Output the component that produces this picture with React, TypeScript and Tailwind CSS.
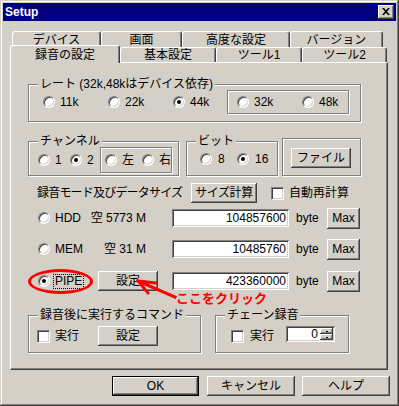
import React from 'react';

const raised =
  'bg-[#d4d0c8] shadow-[inset_-1px_-1px_0_#404040,inset_1px_1px_0_#ffffff,inset_-2px_-2px_0_#808080,inset_2px_2px_0_#d4d0c8]';
const sunken =
  'bg-white shadow-[inset_1px_1px_0_#808080,inset_-1px_-1px_0_#ffffff,inset_2px_2px_0_#404040,inset_-2px_-2px_0_#d4d0c8]';

type Props = { className?: string; children?: React.ReactNode };

function Btn({ className = '', children }: Props) {
  return <div className={`flex items-center justify-center shrink-0 ${raised} ${className}`}>{children}</div>;
}

function Field({ className = '', children }: Props) {
  return <div className={`flex items-center shrink-0 ${sunken} ${className}`}>{children}</div>;
}

function Radio({ checked = false }: { checked?: boolean }) {
  return (
    <span className="w-[12px] h-[12px] shrink-0 rounded-full bg-white border border-t-[#808080] border-l-[#808080] border-r-white border-b-white shadow-[inset_1px_1px_0_#404040,inset_-1px_-1px_0_#d4d0c8] flex items-center justify-center">
      {checked && <span className="w-[4px] h-[4px] rounded-full bg-black" />}
    </span>
  );
}

function Check({ className = '' }: { className?: string }) {
  return (
    <span
      className={`w-[13px] h-[13px] shrink-0 bg-white border border-t-[#808080] border-l-[#808080] border-r-white border-b-white shadow-[inset_1px_1px_0_#404040,inset_-1px_-1px_0_#d4d0c8] ${className}`}
    />
  );
}

function RadioItem({ label, checked, className = '' }: { label: string; checked?: boolean; className?: string }) {
  return (
    <div className={`flex items-center gap-[5px] shrink-0 ${className}`}>
      <Radio checked={checked} />
      <span>{label}</span>
    </div>
  );
}

function Group({ label, className = '', children }: Props & { label?: string }) {
  return (
    <div className={`relative shrink-0 border border-[#808080] shadow-[inset_1px_1px_0_#ffffff,1px_1px_0_#ffffff] ${className}`}>
      {label && (
        <span className="absolute -top-[8px] left-[9px] px-[2px] bg-[#d4d0c8] leading-[14px] whitespace-nowrap">{label}</span>
      )}
      {children}
    </div>
  );
}

function Tab({ label, selected, className = '' }: { label: string; selected?: boolean; className?: string }) {
  return (
    <div
      className={`flex items-center justify-center shrink-0 bg-[#d4d0c8] border-t border-l border-white border-r border-r-[#404040] shadow-[inset_-1px_0_0_#808080] rounded-tl-[3px] rounded-tr-[3px] ${
        selected ? 'relative z-10 -mb-[1px]' : ''
      } ${className}`}
    >
      {label}
    </div>
  );
}

function SizeRow({ mode, free, value, checked }: { mode: string; free: string; value: string; checked?: boolean }) {
  return (
    <div className="h-[22px] flex items-center pl-[10px]">
      <Radio checked={checked} />
      <span className="ml-[5px] w-[33px]">{mode}</span>
      <span className="w-[58px] text-right">{free}</span>
      <Field className="ml-[26px] w-[117px] h-[18px] justify-end pr-[3px]">{value}</Field>
      <span className="ml-[7px] w-[31px]">byte</span>
      <Btn className="w-[33px] h-[21px]">Max</Btn>
    </div>
  );
}

export default function App() {
  return (
    <div className="relative w-[399px] h-[406px] p-[3px] flex flex-col bg-[#d4d0c8] text-black text-[12px] leading-[14px] font-['Liberation_Sans','Noto_Sans_CJK_JP',sans-serif] shadow-[inset_-1px_-1px_0_#404040,inset_1px_1px_0_#d4d0c8,inset_-2px_-2px_0_#808080,inset_2px_2px_0_#ffffff] overflow-hidden">
      {/* Title bar */}
      <div className="h-[18px] shrink-0 bg-[#000080] flex items-center justify-between pl-[2px] pr-[2px]">
        <span className="text-white font-bold text-[12px]">Setup</span>
        <Btn className="w-[16px] h-[14px]">
          <svg width="8" height="7" viewBox="0 0 8 7" className="-ml-[1px] -mt-[1px]">
            <path d="M0 0h2l2 2.2L6 0h2L5 3.5 8 7H6L4 4.8 2 7H0l3-3.5z" fill="#000" />
          </svg>
        </Btn>
      </div>

      {/* Tabs, back row */}
      <div className="mt-[10px] ml-[9px] flex h-[16px] shrink-0">
        <Tab label="デバイス" className="w-[89px] h-[16px]" />
        <Tab label="画面" className="w-[81px] h-[16px]" />
        <Tab label="高度な設定" className="w-[108px] h-[16px]" />
        <Tab label="バージョン" className="w-[93px] h-[16px]" />
      </div>
      {/* Tabs, front row */}
      <div className="-mt-[2px] ml-[7px] flex items-end h-[17px] shrink-0">
        <Tab label="録音の設定" selected className="w-[110px] h-[18px]" />
        <Tab label="基本設定" className="w-[96px] h-[15px]" />
        <Tab label="ツール1" className="w-[86px] h-[15px]" />
        <Tab label="ツール2" className="w-[85px] h-[15px]" />
      </div>

      {/* Panel */}
      <div className="ml-[7px] w-[378px] h-[308px] shrink-0 border-t border-l border-white border-r border-b border-r-[#404040] border-b-[#404040] shadow-[inset_-1px_-1px_0_#808080] pl-[17px] flex flex-col">
        {/* Rate */}
        <Group label="レート (32k,48kはデバイス依存)" className="mt-[21px] w-[333px] h-[38px]">
          <div className="flex items-center pl-[14px] pt-[5px]">
            <RadioItem label="11k" className="w-[65px]" />
            <RadioItem label="22k" className="w-[65px]" />
            <RadioItem label="44k" checked className="w-[54px]" />
            <Group className="w-[122px] h-[24px] flex items-center pl-[9px]">
              <RadioItem label="32k" className="w-[65px]" />
              <RadioItem label="48k" />
            </Group>
          </div>
        </Group>

        {/* Channel / bit / file */}
        <div className="mt-[16px] flex items-end">
          <Group label="チャンネル" className="w-[151px] h-[35px] pl-[9px] pt-[5px] flex items-start">
            <div className="flex items-center h-[26px]">
              <RadioItem label="1" className="w-[32px] gap-[4px]" />
              <RadioItem label="2" checked className="w-[30px] gap-[4px]" />
            </div>
            <Group className="w-[72px] h-[26px] flex items-center pl-[4px]">
              <RadioItem label="左" className="w-[37px] gap-[3px]" />
              <RadioItem label="右" className="gap-[3px]" />
            </Group>
          </Group>
          <Group label="ビット" className="ml-[7px] w-[92px] h-[35px] flex items-center pl-[13px]">
            <RadioItem label="8" className="w-[37px] gap-[6px]" />
            <RadioItem label="16" checked className="gap-[6px]" />
          </Group>
          <Group className="ml-[4px] w-[79px] h-[38px] pl-[8px] pt-[9px]">
            <Btn className="w-[60px] h-[20px]">ファイル</Btn>
          </Group>
        </div>

        {/* Mode header */}
        <div className="mt-[7px] h-[20px] flex items-center pl-[9px]">
          <span className="w-[154px] tracking-[-0.8px] whitespace-nowrap">録音モード及びデータサイズ</span>
          <Btn className="w-[66px] h-[20px] tracking-[-0.4px]">サイズ計算</Btn>
          <Check className="ml-[14px]" />
          <span className="ml-[5px]">自動再計算</span>
        </div>

        <div className="mt-[4px]">
          <SizeRow mode="HDD" free="空 5773 M" value="104857600" />
        </div>
        <div className="mt-[9px]">
          <SizeRow mode="MEM" free="空 31 M" value="10485760" />
        </div>
        <div className="mt-[10px] h-[22px] flex items-center pl-[10px]">
          <Radio checked />
          <span className="ml-[3px] w-[31px] h-[15px] shrink-0 border border-dotted border-black pl-[1px] leading-[13px] whitespace-nowrap">PIPE</span>
          <Btn className="ml-[14px] w-[60px] h-[20px]">設定</Btn>
          <Field className="ml-[14px] w-[117px] h-[18px] justify-end pr-[3px]">423360000</Field>
          <span className="ml-[7px] w-[31px]">byte</span>
          <Btn className="w-[33px] h-[21px]">Max</Btn>
        </div>

        {/* Command / chain */}
        <div className="mt-[23px] flex">
          <Group label="録音後に実行するコマンド" className="w-[173px] h-[38px] pl-[8px] pt-[10px]">
            <div className="flex items-center h-[20px]">
              <Check />
              <span className="ml-[5px] w-[43px]">実行</span>
              <Btn className="w-[60px] h-[20px]">設定</Btn>
            </div>
          </Group>
          <Group label="チェーン録音" className="ml-[14px] w-[134px] h-[38px] pl-[15px] pt-[10px]">
            <div className="flex items-center h-[20px]">
              <Check />
              <span className="ml-[6px] w-[36px]">実行</span>
              <Field className="mb-[4px] w-[49px] h-[16px] p-[2px] items-stretch">
                <span className="flex-1 text-right pr-[2px] leading-[12px]">0</span>
                <div className="w-[13px] flex flex-col">
                  <Btn className="h-1/2 w-full">
                    <span className="w-[2px] h-[1px] bg-black" />
                  </Btn>
                  <Btn className="h-1/2 w-full">
                    <span className="w-[2px] h-[1px] bg-black" />
                  </Btn>
                </div>
              </Field>
            </div>
          </Group>
        </div>
      </div>

      {/* Dialog buttons */}
      <div className="mt-[6px] flex justify-end pr-[6px]">
        <div className="w-[87px] h-[20px] border border-black flex">
          <Btn className="w-full h-full">OK</Btn>
        </div>
        <Btn className="ml-[8px] w-[88px] h-[20px]">キャンセル</Btn>
        <Btn className="ml-[7px] w-[88px] h-[20px]">ヘルプ</Btn>
      </div>

      {/* Red annotation */}
      <div className="absolute left-[28px] top-[269px] w-[65px] h-[25px] border-[3px] border-[#ff0000] rounded-[50%]" />
      <svg className="absolute left-[130px] top-[275px]" width="50" height="26" viewBox="0 0 50 26">
        <path d="M45 22 L8 6 M8 6 L26 8 M8 6 L18 18" stroke="#ff0000" strokeWidth="3" fill="none" strokeLinecap="square" />
      </svg>
      <span className="absolute left-[176px] top-[291px] text-[13px] leading-[16px] font-bold text-[#ff0000]">ここをクリック</span>
    </div>
  );
}
